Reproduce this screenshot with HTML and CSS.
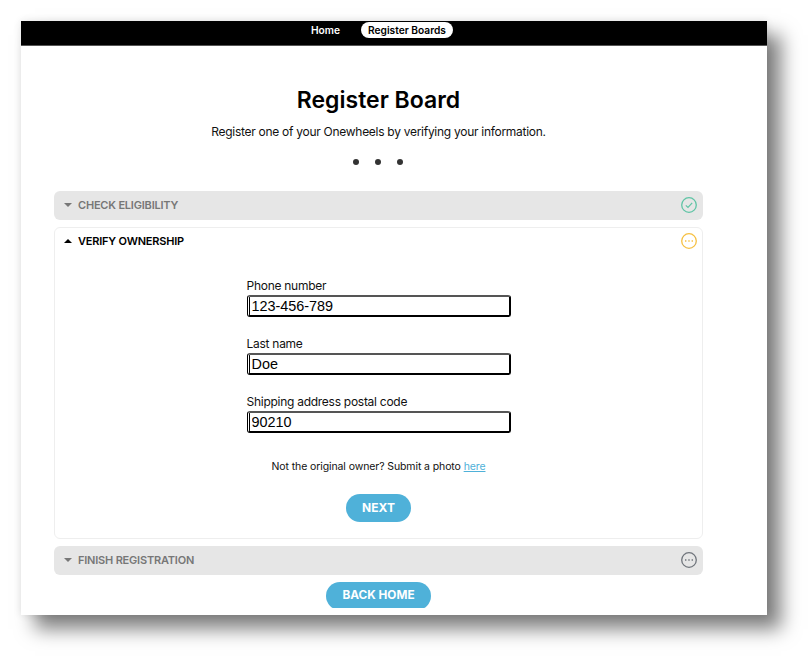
FILE: index.html
```html
<!DOCTYPE html>
<html lang="en">
<head>
    <meta charset="UTF-8">
    <title>Register Board</title>
    <link rel="stylesheet" href="styles.css">
</head>
<body>
<div class="window">
    <nav class="topbar">
        <a class="nav-link">Home</a>
        <a class="nav-link active">Register Boards</a>
    </nav>
    <main class="content">
        <h1>Register Board</h1>
        <p class="subtitle">Register one of your Onewheels by verifying your information.</p>
        <div class="dots"><span></span><span></span><span></span></div>

        <div class="step closed">
            <span class="caret"></span>
            <span class="step-title">CHECK ELIGIBILITY</span>
            <svg class="status" viewBox="0 0 16 16" fill="none" stroke="#5fc4a5">
                <circle cx="8" cy="8" r="7.3" stroke-width="1.3"/>
                <path d="M4.8 8.3l2.2 2.2 4.2-4.6" stroke-width="1.2"/>
            </svg>
        </div>

        <div class="card">
            <div class="step open">
                <span class="caret up"></span>
                <span class="step-title">VERIFY OWNERSHIP</span>
                <svg class="status" viewBox="0 0 16 16" fill="none" stroke="#f6c042">
                    <circle cx="8" cy="8" r="7.3" stroke-width="1.3"/>
                    <path d="M4 8h1.4M7.3 8h1.4M10.6 8h1.4" stroke-width="1.4"/>
                </svg>
            </div>
            <form class="form">
                <label class="field">Phone number
                    <input type="text" value="123-456-789">
                </label>
                <label class="field">Last name
                    <input type="text" value="Doe">
                </label>
                <label class="field">Shipping address postal code
                    <input type="text" value="90210">
                </label>
                <p class="note">Not the original owner? Submit a photo <a href="#">here</a></p>
                <button type="button" class="btn">NEXT</button>
            </form>
        </div>

        <div class="step closed">
            <span class="caret"></span>
            <span class="step-title">FINISH REGISTRATION</span>
            <svg class="status" viewBox="0 0 16 16" fill="none" stroke="#70757c">
                <circle cx="8" cy="8" r="7.3" stroke-width="1.3"/>
                <path d="M4 8h1.4M7.3 8h1.4M10.6 8h1.4" stroke-width="1.4"/>
            </svg>
        </div>

        <button type="button" class="btn back">BACK HOME</button>
    </main>
</div>
</body>
</html>
```

FILE: styles.css
```css
body {
  margin: 0;
  padding: 21px 42px 43px 21px;
  background: #fff;
  font-family: Inter, "Liberation Sans", sans-serif;
  color: #111;
}
.window {
  height: 594px;
  background: #fff;
  overflow: hidden;
  box-shadow: 14px 14px 18px rgba(0,0,0,0.5), 0 0 8px rgba(0,0,0,0.1);
}
.topbar {
  height: 25px;
  background: #000;
  border-bottom: 1px solid #555;
  box-sizing: border-box;
  display: flex;
  justify-content: center;
  align-items: flex-start;
  gap: 21px;
  padding: 1px 24px 0 0;
  font-size: 10.2px;
  font-weight: 600;
}
.nav-link {
  color: #fff;
  line-height: 16px;
}
.nav-link.active {
  background: #fff;
  color: #000;
  border-radius: 9px;
  padding: 0 7px;
}
.content {
  width: 649px;
  margin-left: 33px;
  height: 562px;
  overflow: hidden;
}
h1 {
  margin: 39px 0 0;
  font-size: 23px;
  line-height: 30px;
  font-weight: 600;
  text-align: center;
  color: #000;
}
.subtitle {
  margin: 8px 0 0;
  font-size: 12px;
  letter-spacing: -0.28px;
  line-height: 18px;
  text-align: center;
}
.dots {
  display: flex;
  justify-content: center;
  gap: 16px;
  margin: 18px 2px 0 0;
  height: 6px;
}
.dots span {
  width: 6px;
  height: 6px;
  border-radius: 50%;
  background: #333;
}
.step {
  display: flex;
  align-items: center;
  box-sizing: border-box;
  height: 29px;
  padding: 0 6px 2px 10px;
  font-size: 11px;
  letter-spacing: -0.2px;
  font-weight: 600;
  border-radius: 6px;
}
.closed {
  background: #e6e6e6;
  color: #777;
  margin-top: 26px;
}
.card + .closed {
  margin-top: 7px;
}
.open {
  color: #000;
  height: 25px;
  padding: 0 5px 2px 9px;
  margin-top: 1px;
}
.caret {
  width: 0;
  height: 0;
  border-left: 4px solid transparent;
  border-right: 4px solid transparent;
  border-top: 4px solid #777;
  margin-right: 6px;
}
.caret.up {
  border-top: 0;
  border-bottom: 4px solid #000;
}
.step-title {
  flex: 1;
}
.status {
  width: 16px;
  height: 16px;
}
.card {
  margin-top: 7px;
  height: 312px;
  box-sizing: border-box;
  border: 1px solid #eee;
  border-radius: 6px;
}
.form {
  width: 264px;
  margin: 24px auto 0;
  display: flex;
  flex-direction: column;
  align-items: center;
}
.field {
  width: 100%;
  display: block;
  font-size: 12px;
  letter-spacing: -0.27px;
  line-height: 16px;
  margin-bottom: 19px;
}
.field input {
  display: block;
  width: 100%;
  height: 22px;
  box-sizing: border-box;
  margin-top: 1px;
  padding: 0 3px 0 2px;
  border: 2px solid #000;
  border-top-color: #555;
  border-left: 3px double #000;
  border-radius: 3px;
  font-family: "Liberation Sans", sans-serif;
  font-size: 14.4px;
  color: #000;
}
.note {
  margin: 7px 0 0;
  font-size: 10.5px;
  letter-spacing: -0.1px;
  line-height: 16px;
}
.note a {
  color: #4fb1d9;
}
.btn {
  display: block;
  height: 28px;
  padding: 0 16px 2px;
  margin-top: 19px;
  border: 0;
  border-radius: 14px;
  background: #4fb1d9;
  color: #fff;
  font-family: inherit;
  font-size: 12px;
  font-weight: 700;
}
.back {
  margin: 7px auto 0;
  font-size: 11.8px;
}
```
